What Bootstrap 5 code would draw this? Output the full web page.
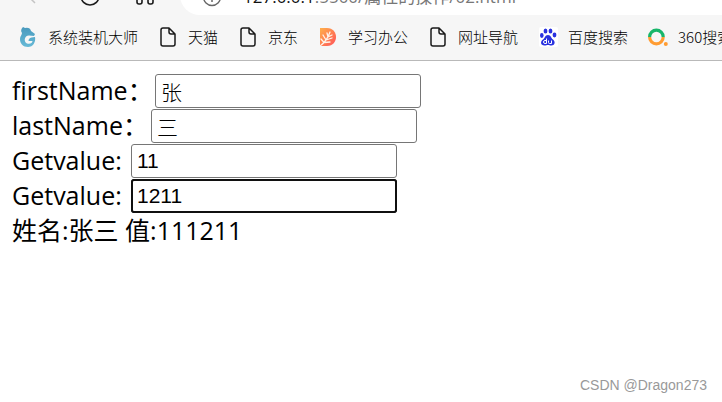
<!DOCTYPE html>
<html lang="zh-CN">
<head>
<meta charset="utf-8">
<meta name="viewport" content="width=device-width, initial-scale=1">
<title>属性的操作</title>
<link href="https://cdn.jsdelivr.net/npm/bootstrap@5.3.0/dist/css/bootstrap.min.css" rel="stylesheet">
<style>
body{font-family:"Open Sans","Noto Sans CJK SC",sans-serif;color:#000;background:#fff}
.browser{background:#f6f6f6;border-bottom:1px solid #b9b9b9}
.toolbar{height:15px;padding-left:24px}
.toolbar button{width:24px;height:24px;margin-right:32px}
.toolbar svg,.bookmarks svg{display:block;flex:none}
.address{height:40px;margin-left:-12px;padding-left:22px;border-radius:20px 0 0 20px;background:#fff;font:17px/24px "Open Sans","Noto Sans CJK SC",sans-serif;color:#777}
.address b{font-weight:400;color:#111}
.address span{padding-bottom:6px}
.bookmarks{height:44px;margin-bottom:1px;gap:22px;padding-left:20px}
.bookmarks a{gap:12px;font:300 15px/22px "Noto Sans CJK SC",sans-serif;color:#000}
.demo{padding:13px 12px;font-size:25px;line-height:32px}
.field{height:35px}
.field label{white-space:nowrap;width:119px}
.field .wide{width:143px}
.field .medium{width:139px}
.field input{width:266px;height:34px;padding:0 5px;border:1px solid #767676;border-radius:3px;font:21px "Liberation Sans","Noto Sans CJK SC",sans-serif;font-weight:300;color:#000;background:#fff}
.field input.current{border-color:#101010;outline:2px solid #101010;outline-offset:-2px}
.credit{right:15px;bottom:7px;font:14px/20px "Liberation Sans",sans-serif;color:#999}
</style>
<script src="https://cdn.jsdelivr.net/npm/bootstrap@5.3.0/dist/js/bootstrap.bundle.min.js"></script>
</head>
<body class="position-relative min-vh-100 overflow-hidden">
<svg class="d-none" aria-hidden="true"><symbol id="page" viewBox="0 0 16 20"><path d="M3 1h6l6 6v10a2 2 0 0 1-2 2H3a2 2 0 0 1-2-2V3a2 2 0 0 1 2-2zM9 1v4a2 2 0 0 0 2 2h4" fill="none" stroke="#1b1b1b" stroke-width="1.5" stroke-linejoin="round"/></symbol></svg>
<header class="browser">
  <div class="toolbar d-flex align-items-end overflow-hidden">
    <button type="button" class="btn border-0 p-0 flex-shrink-0" aria-label="后退"><svg width="24" height="24" viewBox="0 0 24 24"><path d="M11 12L3 4l8-8" fill="none" stroke="#c4c4c4" stroke-width="1.5"/></svg></button>
    <button type="button" class="btn border-0 p-0 flex-shrink-0" aria-label="刷新"><svg width="24" height="24" viewBox="0 0 24 24"><circle cx="10" cy="5" r="9" fill="none" stroke="#1b1b1b" stroke-width="1.6"/></svg></button>
    <button type="button" class="btn border-0 p-0 flex-shrink-0" aria-label="应用"><svg width="24" height="24" viewBox="0 0 24 24"><path d="M1 6h5v5q0 2-2 2H3q-2 0-2-2zM12 6h5v5q0 2-2 2h-1q-2 0-2-2z" fill="none" stroke="#1b1b1b" stroke-width="1.6"/></svg></button>
    <div class="address d-flex align-items-end flex-grow-1 text-nowrap">
      <svg width="41" height="24" viewBox="0 0 41 24"><circle cx="10" cy="6" r="8.500" fill="none" stroke="#666" stroke-width="1.4"/><path d="M10 5v6" stroke="#666" stroke-width="1.5"/></svg>
      <span><b>127.0.0.1</b>:5500/属性的操作/02.html</span>
    </div>
  </div>
  <nav class="bookmarks d-flex align-items-center overflow-hidden text-nowrap" aria-label="书签">
    <a href="#" class="d-flex align-items-center text-decoration-none"><svg width="16" height="20" viewBox="0 0 16 20"><defs><linearGradient id="sea" y2="1" x2="0"><stop stop-color="#4899bd"/><stop offset="1" stop-color="#67bad7"/></linearGradient></defs><path d="M3 0l2 1q5-1 6 3l4 3-1 2-5-.5C4 8.500 3.500 15 7 16.500c3 1 5.500-.5 5.500-2.500H8.500q0-3 3-3.500l3.500-.5c1 5-2 10-7 10C3 20 0 16.500 0 12c0-3 2-4 2-6-1.500-2-1-4 1-6z" fill="url(#sea)"/></svg>系统装机大师</a>
    <a href="#" class="d-flex align-items-center text-decoration-none"><svg width="16" height="20"><use href="#page"/></svg>天猫</a>
    <a href="#" class="d-flex align-items-center text-decoration-none"><svg width="16" height="20"><use href="#page"/></svg>京东</a>
    <a href="#" class="d-flex align-items-center text-decoration-none"><svg width="16" height="20" viewBox="0 0 16 20"><defs><linearGradient id="sun" x2="1" y2="1"><stop stop-color="#ffb04b"/><stop offset="1" stop-color="#ff5259"/></linearGradient></defs><path d="M0 1h7c12 0 12 18 0 18H0z" fill="url(#sun)"/><path d="M0 19Q7 14 10 5M4 15.500L1 12M4 15.500l6-.5M6 13L3 8M6 13l6-2M8 10L7 6M8 10l4-2" fill="none" stroke="#fff3e8" stroke-width="1.300" stroke-linecap="round"/></svg>学习办公</a>
    <a href="#" class="d-flex align-items-center text-decoration-none"><svg width="16" height="20"><use href="#page"/></svg>网址导航</a>
    <a href="#" class="d-flex align-items-center text-decoration-none"><svg class="overflow-visible" width="16" height="20" viewBox="0 0 16 20"><rect x="-1" y="0" width="19" height="20" rx="2" fill="#fff"/><g fill="#2932df"><ellipse cx="1.800" cy="8.500" rx="1.800" ry="2.400"/><ellipse cx="5.500" cy="4" rx="1.900" ry="2.600"/><ellipse cx="10.500" cy="4" rx="1.900" ry="2.600"/><ellipse cx="14.500" cy="8" rx="1.900" ry="2.400"/><path d="M8 8c3 0 3 3 5 4.500 3 2.500 1.500 6-1.500 6-2 0-2-.5-3.500-.5s-1.500.5-3.500.5c-4 0-4.500-4-1.500-6C5 11 5 8 8 8z"/></g><path d="M6.500 11.500v5H5q-1.500 0-1.500-1.500T5 13.500h1.500M8.500 13.500v2q0 1 1 1h2v-3" fill="none" stroke="#fff" stroke-width="1"/></svg>百度搜索</a>
    <a href="#" class="d-flex align-items-center text-decoration-none"><svg class="overflow-visible" width="16" height="20" viewBox="0 0 16 20"><g fill="none" stroke-width="3.200"><path d="M-.4 10a6.800 6.800 0 0 1 13.600 0" stroke="#18b66a"/><path d="M-.4 10a6.800 6.800 0 0 0 13.600 0" stroke="#ff9c32"/></g><circle cx="15.800" cy="17" r="2" fill="#ff9c32"/></svg>360搜索</a>
  </nav>
</header>
<main class="demo">
  <form>
    <div class="field d-flex align-items-start"><label class="wide" for="first">firstName：</label><input id="first" type="text" value="张"></div>
    <div class="field d-flex align-items-start"><label class="medium" for="last">lastName：</label><input id="last" type="text" value="三"></div>
    <div class="field d-flex align-items-start"><label for="one">Getvalue:</label><input id="one" type="text" value="11"></div>
    <div class="field d-flex align-items-start"><label for="two">Getvalue:</label><input id="two" class="current" type="text" value="1211"></div>
  </form>
  <div>姓名:张三 值:111211</div>
</main>
<footer class="credit position-absolute">CSDN @Dragon273</footer>
</body>
</html>
